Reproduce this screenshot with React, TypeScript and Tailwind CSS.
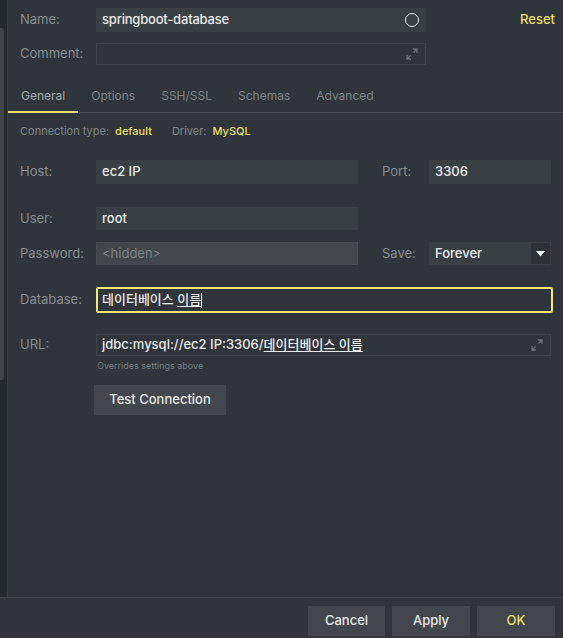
import React from "react";

const font = { fontFamily: '"Inter", "Noto Sans CJK KR", sans-serif' };

// small double-headed diagonal arrow used on expandable text fields
const ExpandIcon = () => (
  <svg width="12" height="12" viewBox="0 0 12 12" fill="none">
    <path d="M7 1h4v4M11 1L7.5 4.5" stroke="#6b7175" strokeWidth="1.3" />
    <path d="M5 11H1V7M1 11l3.5-3.5" stroke="#6b7175" strokeWidth="1.3" />
  </svg>
);

const Label: React.FC<{ children: React.ReactNode; className?: string }> = ({ children, className }) => (
  <div className={`text-[13px] text-[#888e92] ${className ?? "w-[76px]"}`}>{children}</div>
);

const tabs = ["General", "Options", "SSH/SSL", "Schemas", "Advanced"];

export default function App() {
  return (
    <div style={font} className="w-[563px] h-[638px] bg-[#2f353a] flex flex-col select-none">
      <div className="flex-1 flex min-h-0">
        {/* left scrollbar strip */}
        <div className="w-[8px] bg-[#232a2c] border-r border-[#3a4044] flex-shrink-0">
          <div className="mt-[28px] h-[352px] w-[4px] rounded-r-[2px] bg-[#3e4447]" />
        </div>

        <div className="flex-1 flex flex-col">
          {/* Name */}
          <div className="flex items-center mt-[8px] pl-[12px] pr-[8px] h-[24px]">
            <Label>Name:</Label>
            <div className="w-[330px] h-[24px] bg-[#394043] flex items-center px-[6px]">
              <span className="flex-1 text-[13px] font-medium tracking-[-0.2px] text-[#e8eaeb]">springboot-database</span>
              <span className="w-[14px] h-[14px] rounded-full border-[1.5px] border-[#e6e8e9] mr-[1px]" />
            </div>
            <div className="flex-1" />
            <span className="text-[13px] font-medium text-[#eadf6c]">Reset</span>
          </div>

          {/* Comment */}
          <div className="flex items-center mt-[11px] pl-[12px] h-[22px]">
            <Label>Comment:</Label>
            <div className="w-[330px] h-[22px] border border-[#3d4346] flex items-center justify-end pr-[7px]">
              <ExpandIcon />
            </div>
          </div>

          {/* Tabs */}
          <div className="flex mt-[15px] h-[33px] border-b border-[#4a5054]">
            {tabs.map((t, i) => (
              <div
                key={t}
                className={`px-[13px] flex items-center text-[12px] ${
                  i === 0 ? "text-[#a7acaf] border-b-2 border-[#eadf6c] -mb-px" : "text-[#80868a]"
                }`}
              >
                {t}
              </div>
            ))}
          </div>

          {/* Connection type */}
          <div className="flex items-center mt-[11px] pl-[12px] h-[14px] text-[11px]">
            <span className="text-[#80868a]">Connection type:</span>
            <span className="ml-[6px] text-[#eadf6c] font-medium">default</span>
            <span className="ml-[20px] text-[#80868a]">Driver:</span>
            <span className="ml-[6px] text-[#eadf6c] font-medium">MySQL</span>
          </div>

          {/* Host / Port */}
          <div className="flex items-center mt-[22px] pl-[12px] h-[24px]">
            <Label>Host:</Label>
            <div className="w-[262px] h-[24px] bg-[#394043] flex items-center px-[6px] text-[13px] font-medium text-[#e8eaeb]">
              ec2 IP
            </div>
            <Label className="ml-[24px] w-[47px]">Port:</Label>
            <div className="w-[122px] h-[24px] bg-[#394043] flex items-center px-[6px] text-[13px] font-medium text-[#e8eaeb]">
              3306
            </div>
          </div>

          {/* User */}
          <div className="flex items-center mt-[23px] pl-[12px] h-[23px]">
            <Label>User:</Label>
            <div className="w-[262px] h-[23px] bg-[#394043] flex items-center px-[6px] text-[13px] font-medium text-[#e8eaeb]">
              root
            </div>
          </div>

          {/* Password / Save */}
          <div className="flex items-center mt-[12px] pl-[12px] h-[23px]">
            <Label>Password:</Label>
            <div className="w-[262px] h-[23px] bg-[#41474b] border border-[#454b4f] flex items-center px-[5px] text-[13px] text-[#7d8387]">
              &lt;hidden&gt;
            </div>
            <Label className="ml-[24px] w-[47px]">Save:</Label>
            <div className="w-[122px] h-[23px] bg-[#394043] flex items-center">
              <span className="flex-1 pl-[6px] text-[13px] font-medium text-[#e8eaeb]">Forever</span>
              <div className="w-[21px] h-[23px] bg-[#2c3235] border border-[#394043] flex items-center justify-center">
                <svg width="9" height="6" viewBox="0 0 9 6">
                  <path d="M0 0h9L4.5 5.5z" fill="#eef0f1" />
                </svg>
              </div>
            </div>
          </div>

          {/* Database */}
          <div className="flex items-center mt-[22px] pl-[12px] h-[26px]">
            <Label>Database:</Label>
            <div className="w-[457px] h-[26px] border-2 border-[#f3e77a] rounded-[2px] flex items-center px-[4px] text-[13px] font-medium text-[#e8eaeb]">
              <span>데이터베이스&nbsp;</span>
              <span className="underline underline-offset-2">이름</span>
              <span className="w-px h-[15px] bg-[#e8eaeb]" />
            </div>
          </div>

          {/* URL */}
          <div className="flex items-center mt-[21px] pl-[12px] h-[22px]">
            <Label>URL:</Label>
            <div className="w-[455px] h-[22px] border border-[#3d4346] flex items-center pl-[5px] pr-[7px] text-[13px] font-medium text-[#e8eaeb]">
              <span className="flex-1">
                jdbc:mysql://ec2 IP:3306/<span className="underline underline-offset-2">데이터베이스 이름</span>
              </span>
              <ExpandIcon />
            </div>
          </div>
          <div className="pl-[89px] mt-[3px] text-[9px] text-[#7a8084]">Overrides settings above</div>

          {/* Test connection */}
          <div className="pl-[86px] mt-[12px]">
            <button className="w-[132px] h-[30px] bg-[#41474c] text-[13px] font-medium text-[#e6e8e9]">
              Test Connection
            </button>
          </div>
        </div>
      </div>

      {/* Footer */}
      <div className="h-[41px] border-t border-[#3c4246] flex items-start justify-end gap-[7px] pt-[8px] pr-[8px]">
        <button className="w-[77px] h-[30px] bg-[#41474c] text-[13px] font-medium text-[#e6e8e9]">Cancel</button>
        <button className="w-[78px] h-[30px] bg-[#41474c] text-[13px] font-medium text-[#e6e8e9]">Apply</button>
        <button className="w-[78px] h-[30px] bg-[#41474c] text-[13px] font-medium text-[#eadf6c]">OK</button>
      </div>
    </div>
  );
}
